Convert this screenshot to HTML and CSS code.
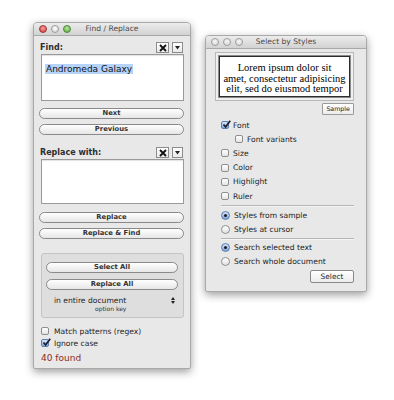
FILE: index.html
```html
<!DOCTYPE html>
<html>
<head>
<meta charset="utf-8">
<link rel="stylesheet" href="styles.css">
</head>
<body>
<div class="desk">
  <div class="win win-find">
    <div class="titlebar">
      <div class="lights">
        <span class="light red"></span><span class="light gray"></span><span class="light green"></span>
      </div>
      <div class="title">Find / Replace</div>
    </div>
    <div class="body find-body">
      <div class="field-head find-head">
        <span class="field-label">Find:</span>
        <span class="tools">
          <span class="tool-btn x-btn"><svg width="8" height="8" viewBox="0 0 8 8"><path d="M1 1 L7 7 M7 1 L1 7" stroke="#111" stroke-width="1.8"/></svg></span>
          <span class="tool-btn menu-btn"><svg width="5" height="4" viewBox="0 0 5 4"><path d="M0 0 H5 L2.5 3.5 Z" fill="#222"/></svg></span>
        </span>
      </div>
      <div class="textbox find-box"><span class="sel">Andromeda Galaxy</span></div>
      <div class="pill gap-next">Next</div>
      <div class="pill gap-5">Previous</div>
      <div class="field-head replace-head">
        <span class="field-label">Replace with:</span>
        <span class="tools">
          <span class="tool-btn x-btn"><svg width="8" height="8" viewBox="0 0 8 8"><path d="M1 1 L7 7 M7 1 L1 7" stroke="#111" stroke-width="1.8"/></svg></span>
          <span class="tool-btn menu-btn"><svg width="5" height="4" viewBox="0 0 5 4"><path d="M0 0 H5 L2.5 3.5 Z" fill="#222"/></svg></span>
        </span>
      </div>
      <div class="textbox replace-box"></div>
      <div class="pill gap-replace">Replace</div>
      <div class="pill gap-5">Replace &amp; Find</div>
      <div class="group">
        <div class="pill">Select All</div>
        <div class="pill gap-6">Replace All</div>
        <div class="popup">
          <div class="popup-main">
            <span>in entire document</span>
            <svg class="stepper" width="4" height="7" viewBox="0 0 4 7"><path d="M0 3 L2 0 L4 3 Z M0 4 L2 7 L4 4 Z" fill="#222"/></svg>
          </div>
          <div class="popup-sub">option key</div>
        </div>
      </div>
      <div class="check-row match-row">
        <span class="cb"></span><span>Match patterns (regex)</span>
      </div>
      <div class="check-row ignore-row">
        <span class="cb on"><svg width="9" height="9" viewBox="0 0 9 9"><path d="M1.5 4.5 L3.6 7 L8.2 0.8" fill="none" stroke="#1a1a2e" stroke-width="1.7"/></svg></span><span>Ignore case</span>
      </div>
      <div class="found">40 found</div>
    </div>
  </div>

  <div class="win win-styles">
    <div class="titlebar">
      <div class="lights">
        <span class="light off"></span><span class="light off"></span><span class="light off"></span>
      </div>
      <div class="title">Select by Styles</div>
    </div>
    <div class="body styles-body">
      <div class="sample-frame">
        <div class="sample-text">Lorem ipsum dolor sit<br>amet, consectetur adipisicing<br>elit, sed do eiusmod tempor</div>
      </div>
      <div class="sample-row"><span class="sq-btn">Sample</span></div>
      <div class="opt-list list-attrs">
        <div class="opt"><span class="cb on"><svg width="9" height="9" viewBox="0 0 9 9"><path d="M1.5 4.5 L3.6 7 L8.2 0.8" fill="none" stroke="#1a1a2e" stroke-width="1.7"/></svg></span><span>Font</span></div>
        <div class="opt sub"><span class="cb"></span><span>Font variants</span></div>
        <div class="opt"><span class="cb"></span><span>Size</span></div>
        <div class="opt"><span class="cb"></span><span>Color</span></div>
        <div class="opt"><span class="cb"></span><span>Highlight</span></div>
        <div class="opt"><span class="cb"></span><span>Ruler</span></div>
      </div>
      <div class="sep sep-1"></div>
      <div class="opt-list">
        <div class="opt"><span class="rb on"></span><span>Styles from sample</span></div>
        <div class="opt"><span class="rb"></span><span>Styles at cursor</span></div>
      </div>
      <div class="sep sep-2"></div>
      <div class="opt-list">
        <div class="opt"><span class="rb on"></span><span>Search selected text</span></div>
        <div class="opt"><span class="rb"></span><span>Search whole document</span></div>
      </div>
      <div class="select-row"><span class="sq-btn select-btn">Select</span></div>
    </div>
  </div>
</div>
</body>
</html>
```

FILE: styles.css
```css
* { box-sizing: border-box; }
html, body { margin: 0; padding: 0; background: #fff; }
body {
  font-family: "DejaVu Sans", "Noto Sans", sans-serif;
  color: #1e1e1e;
  width: 394px;
  height: 400px;
  overflow: hidden;
}
.desk { position: relative; width: 394px; height: 400px; }

.win {
  position: absolute;
  background: #e8e8e8;
  border: 1px solid #a9a9a9;
  border-radius: 4px 4px 2px 2px;
  box-shadow: 0 3px 9px rgba(0,0,0,0.38);
  display: flex;
  flex-direction: column;
  overflow: hidden;
}
.win-find { left: 33px; top: 22px; width: 158px; height: 347px; }
.win-styles { left: 205px; top: 35px; width: 162px; height: 257px; }

.titlebar {
  position: relative;
  height: 13px;
  flex: none;
  background: linear-gradient(#ececec, #d2d2d2);
  border-bottom: 1px solid #a8a8a8;
  display: flex;
  align-items: center;
  justify-content: center;
}
.lights {
  position: absolute;
  left: 5px;
  top: 2px;
  display: flex;
  gap: 4px;
}
.light {
  width: 8px; height: 8px; border-radius: 50%;
  border: 1px solid #8a8a8a;
  background: radial-gradient(circle at 50% 35%, #fafafa, #c8c8c8);
}
.light.red { background: radial-gradient(circle at 50% 35%, #f6a0a0, #d23a3a); border-color: #a03030; }
.light.gray { background: radial-gradient(circle at 50% 35%, #ffffff, #d0d0d0); border-color: #9a9a9a; }
.light.green { background: radial-gradient(circle at 50% 35%, #b8e6a0, #58a83a); border-color: #4a8a30; }
.light.off { background: radial-gradient(circle at 50% 35%, #f4f4f4, #d6d6d6); border-color: #9c9c9c; }
.title { font-size: 7.6px; color: #4a4a4a; line-height: 12px; }

.body { flex: 1; display: flex; flex-direction: column; }

/* Find / Replace */
.find-body { padding: 0 6px 0 5px; }
.field-head {
  display: flex;
  align-items: center;
  justify-content: space-between;
  height: 11px;
  padding-left: 1px;
}
.find-head { margin-top: 6px; }
.replace-head { margin-top: 12px; }
.field-label { font-size: 8px; font-weight: bold; color: #2e2e2e; }
.tools { display: flex; gap: 3px; padding-right: 1px; }
.tool-btn {
  height: 11px;
  border: 1px solid #8c8c8c;
  background: linear-gradient(#ffffff, #e9e9e9);
  display: flex; align-items: center; justify-content: center;
}
.x-btn { width: 13px; }
.menu-btn { width: 11px; }

.textbox {
  margin-top: 1px;
  margin-left: 2px;
  background: #fff;
  border: 1px solid #9a9a9a;
  box-shadow: inset 0 1px 1px rgba(0,0,0,0.12);
  padding: 2px 3px;
}
.find-box { height: 47px; }
.replace-box { height: 45px; }
.sel {
  background: #b5d3fb;
  font-size: 9px;
  line-height: 11px;
  color: #111;
  padding: 0 1px;
}

.pill {
  height: 11px;
  border: 1px solid #8a8a8a;
  border-radius: 6px;
  background: linear-gradient(#ffffff, #e6e6e6);
  font-size: 6.8px;
  font-weight: bold;
  color: #333;
  text-align: center;
  line-height: 9px;
  flex: none;
}
.gap-next { margin-top: 7px; }
.gap-5 { margin-top: 5px; }
.gap-6 { margin-top: 6px; }
.gap-replace { margin-top: 8px; }

.group {
  margin-top: 14px;
  margin-left: 2px;
  height: 65px;
  background: #dedede;
  border: 1px solid #c4c4c4;
  border-radius: 3px;
  padding: 8px 5px 0 4px;
  display: flex;
  flex-direction: column;
}
.popup { margin-top: 6px; padding-left: 8px; padding-right: 3px; }
.popup-main {
  display: flex;
  justify-content: space-between;
  align-items: center;
  font-size: 7.6px;
  line-height: 9px;
  color: #222;
}
.popup-sub { font-size: 6px; line-height: 8px; color: #333; padding-left: 41px; }
.stepper { display: block; }

.check-row {
  display: flex;
  align-items: center;
  gap: 5px;
  font-size: 7.6px;
  height: 10px;
  padding-left: 2px;
}
.match-row { margin-top: 8px; }
.ignore-row { margin-top: 2px; }
.cb {
  width: 8px; height: 8px;
  border: 1px solid #8e8e8e;
  border-radius: 2px;
  background: linear-gradient(#ffffff, #e4e4e4);
  flex: none;
  position: relative;
}
.cb.on { background: linear-gradient(#d6e6fa, #7ea8e0); border-color: #5d7fae; }
.cb svg { position: absolute; left: 0; top: -2px; }
.found { margin-top: 4px; font-size: 9px; color: #8e2a24; padding-left: 2px; line-height: 12px; }

/* Select by Styles */
.styles-body { padding: 0 12px 0 9px; }
.sample-frame {
  margin-top: 3px;
  height: 49px;
  border: 1px solid #b8b8b8;
  background: #efefef;
  padding: 3px;
}
.sample-text {
  height: 100%;
  background: #fff;
  border: 1px solid #2c2c2c;
  box-shadow: 0 0 0 1px #8a8a8a;
  font-family: "Liberation Serif", "Times New Roman", serif;
  font-size: 10.5px;
  line-height: 10.6px;
  text-align: center;
  white-space: nowrap;
  color: #000;
  padding: 6px 0 0;
}
.sample-row { display: flex; justify-content: flex-end; margin-top: 2px; }
.sq-btn {
  height: 12px;
  border: 1px solid #9a9a9a;
  background: linear-gradient(#ffffff, #ececec);
  font-size: 6.3px;
  line-height: 10px;
  padding: 0 3px;
  color: #222;
  border-radius: 1px;
}
.opt-list { display: flex; flex-direction: column; padding-left: 6px; }
.list-attrs { margin-top: 3px; }
.opt {
  display: flex;
  align-items: center;
  gap: 4px;
  height: 14.2px;
  font-size: 7.6px;
  color: #222;
}
.opt.sub { padding-left: 14px; }
.sep { height: 1px; background: #b4b4b4; border-bottom: 1px solid #f6f6f6; box-sizing: content-box; margin-left: 6px; }
.sep-1 { margin-top: 2px; margin-bottom: 1px; }
.sep-2 { margin-top: 1px; margin-bottom: 1px; }
.rb {
  width: 9px; height: 9px;
  border-radius: 50%;
  border: 1px solid #8e8e8e;
  background: linear-gradient(#ffffff, #e2e2e2);
  flex: none;
  position: relative;
}
.rb.on { background: linear-gradient(#d4e4f8, #7aa4dc); border-color: #5a7ca8; }
.rb.on::after {
  content: "";
  position: absolute;
  left: 2px; top: 2px;
  width: 3px; height: 3px;
  border-radius: 50%;
  background: #1c1c2c;
}
.select-row { display: flex; justify-content: flex-end; margin-top: 1px; }
.select-btn { height: 13px; width: 44px; text-align: center; font-size: 7.4px; line-height: 11px; border-radius: 2px; border-color: #8a8a8a; }
```
